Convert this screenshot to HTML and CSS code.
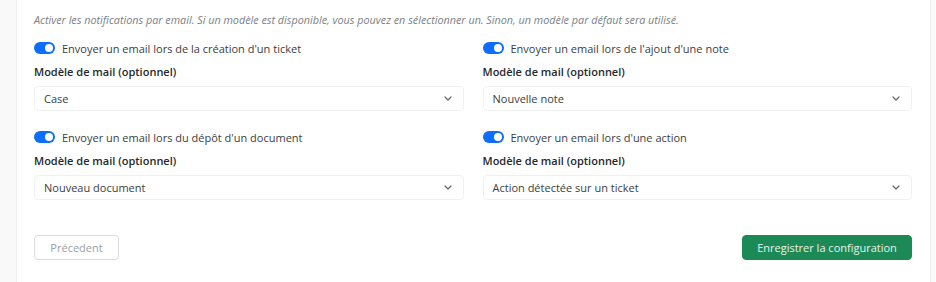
FILE: index.html
```html
<!DOCTYPE html>
<html lang="fr">

<head>
    <meta charset="UTF-8">
    <meta name="viewport" content="width=device-width, initial-scale=1.0">
    <title>Notifications par email</title>
    <link rel="stylesheet" href="styles.css">
</head>

<body>
    <div class="card">
        <p class="hint">Activer les notifications par email. Si un modèle est disponible, vous pouvez en sélectionner un. Sinon, un modèle par défaut sera utilisé.</p>

        <div class="grid">
            <div class="field">
                <label class="switch-row">
                    <input type="checkbox" class="switch" checked>
                    <span>Envoyer un email lors de la création d'un ticket</span>
                </label>
                <div class="field-label">Modèle de mail (optionnel)</div>
                <div class="select">
                    <span>Case</span>
                    <svg width="8" height="5" viewBox="0 0 8 5"><path d="M1 1l3 3 3-3" fill="none" stroke="#666" stroke-width="1.2" stroke-linecap="round" stroke-linejoin="round"/></svg>
                </div>
            </div>

            <div class="field">
                <label class="switch-row">
                    <input type="checkbox" class="switch" checked>
                    <span>Envoyer un email lors de l'ajout d'une note</span>
                </label>
                <div class="field-label">Modèle de mail (optionnel)</div>
                <div class="select">
                    <span>Nouvelle note</span>
                    <svg width="8" height="5" viewBox="0 0 8 5"><path d="M1 1l3 3 3-3" fill="none" stroke="#666" stroke-width="1.2" stroke-linecap="round" stroke-linejoin="round"/></svg>
                </div>
            </div>

            <div class="field">
                <label class="switch-row">
                    <input type="checkbox" class="switch" checked>
                    <span>Envoyer un email lors du dépôt d'un document</span>
                </label>
                <div class="field-label">Modèle de mail (optionnel)</div>
                <div class="select">
                    <span>Nouveau document</span>
                    <svg width="8" height="5" viewBox="0 0 8 5"><path d="M1 1l3 3 3-3" fill="none" stroke="#666" stroke-width="1.2" stroke-linecap="round" stroke-linejoin="round"/></svg>
                </div>
            </div>

            <div class="field">
                <label class="switch-row">
                    <input type="checkbox" class="switch" checked>
                    <span>Envoyer un email lors d'une action</span>
                </label>
                <div class="field-label">Modèle de mail (optionnel)</div>
                <div class="select">
                    <span>Action détectée sur un ticket</span>
                    <svg width="8" height="5" viewBox="0 0 8 5"><path d="M1 1l3 3 3-3" fill="none" stroke="#666" stroke-width="1.2" stroke-linecap="round" stroke-linejoin="round"/></svg>
                </div>
            </div>
        </div>

        <div class="actions">
            <button class="btn btn-outline">Précedent</button>
            <button class="btn btn-success">Enregistrer la configuration</button>
        </div>
    </div>
</body>

</html>
```

FILE: styles.css
```css
/* Global Reset */
* {
    box-sizing: border-box;
    margin: 0;
    padding: 0;
}

body {
    font-family: "Open Sans", Arial, sans-serif;
    background-color: #f9f9fa;
    color: #2b2f33;
    height: 100vh;
    overflow: hidden;
}

.card {
    margin-left: 16px;
    width: 915px;
    height: 100%;
    background-color: #fff;
    border-left: 1px solid #eceef0;
    border-right: 1px solid #eceef0;
    padding: 13px 18px 0 17px;
}

.hint {
    font-size: 10.8px;
    font-style: italic;
    color: #7a7f85;
    line-height: 14px;
}

.grid {
    display: grid;
    grid-template-columns: 1fr 1fr;
    column-gap: 19px;
    row-gap: 18px;
    margin-top: 13px;
}

.switch-row {
    display: flex;
    align-items: center;
    gap: 7px;
    height: 16px;
    font-size: 11px;
    color: #3a3e42;
}

.switch {
    appearance: none;
    width: 21px;
    height: 12px;
    border-radius: 6px;
    background-color: #0d6efd;
    position: relative;
    flex-shrink: 0;
}

.switch::after {
    content: "";
    position: absolute;
    right: 2px;
    top: 2px;
    width: 8px;
    height: 8px;
    border-radius: 50%;
    background-color: #fff;
}

.field-label {
    font-size: 11px;
    font-weight: 600;
    color: #26292c;
    line-height: 16px;
    margin-top: 8px;
}

.select {
    display: flex;
    align-items: center;
    justify-content: space-between;
    height: 25px;
    margin-top: 6px;
    padding: 0 11px 0 9px;
    border: 1px solid #f0f1f3;
    border-radius: 4px;
    font-size: 11px;
    color: #3a3e42;
}

.actions {
    display: flex;
    justify-content: space-between;
    margin-top: 35px;
}

.btn {
    font-family: inherit;
    font-size: 11px;
    height: 25px;
    border-radius: 4px;
    cursor: pointer;
}

.btn-outline {
    width: 85px;
    background-color: #fff;
    border: 1px solid #d9dcdf;
    color: #9a9fa5;
}

.btn-success {
    width: 170px;
    background-color: #1b8a57;
    border: 1px solid #1b8a57;
    color: #e8f3ec;
}
```
